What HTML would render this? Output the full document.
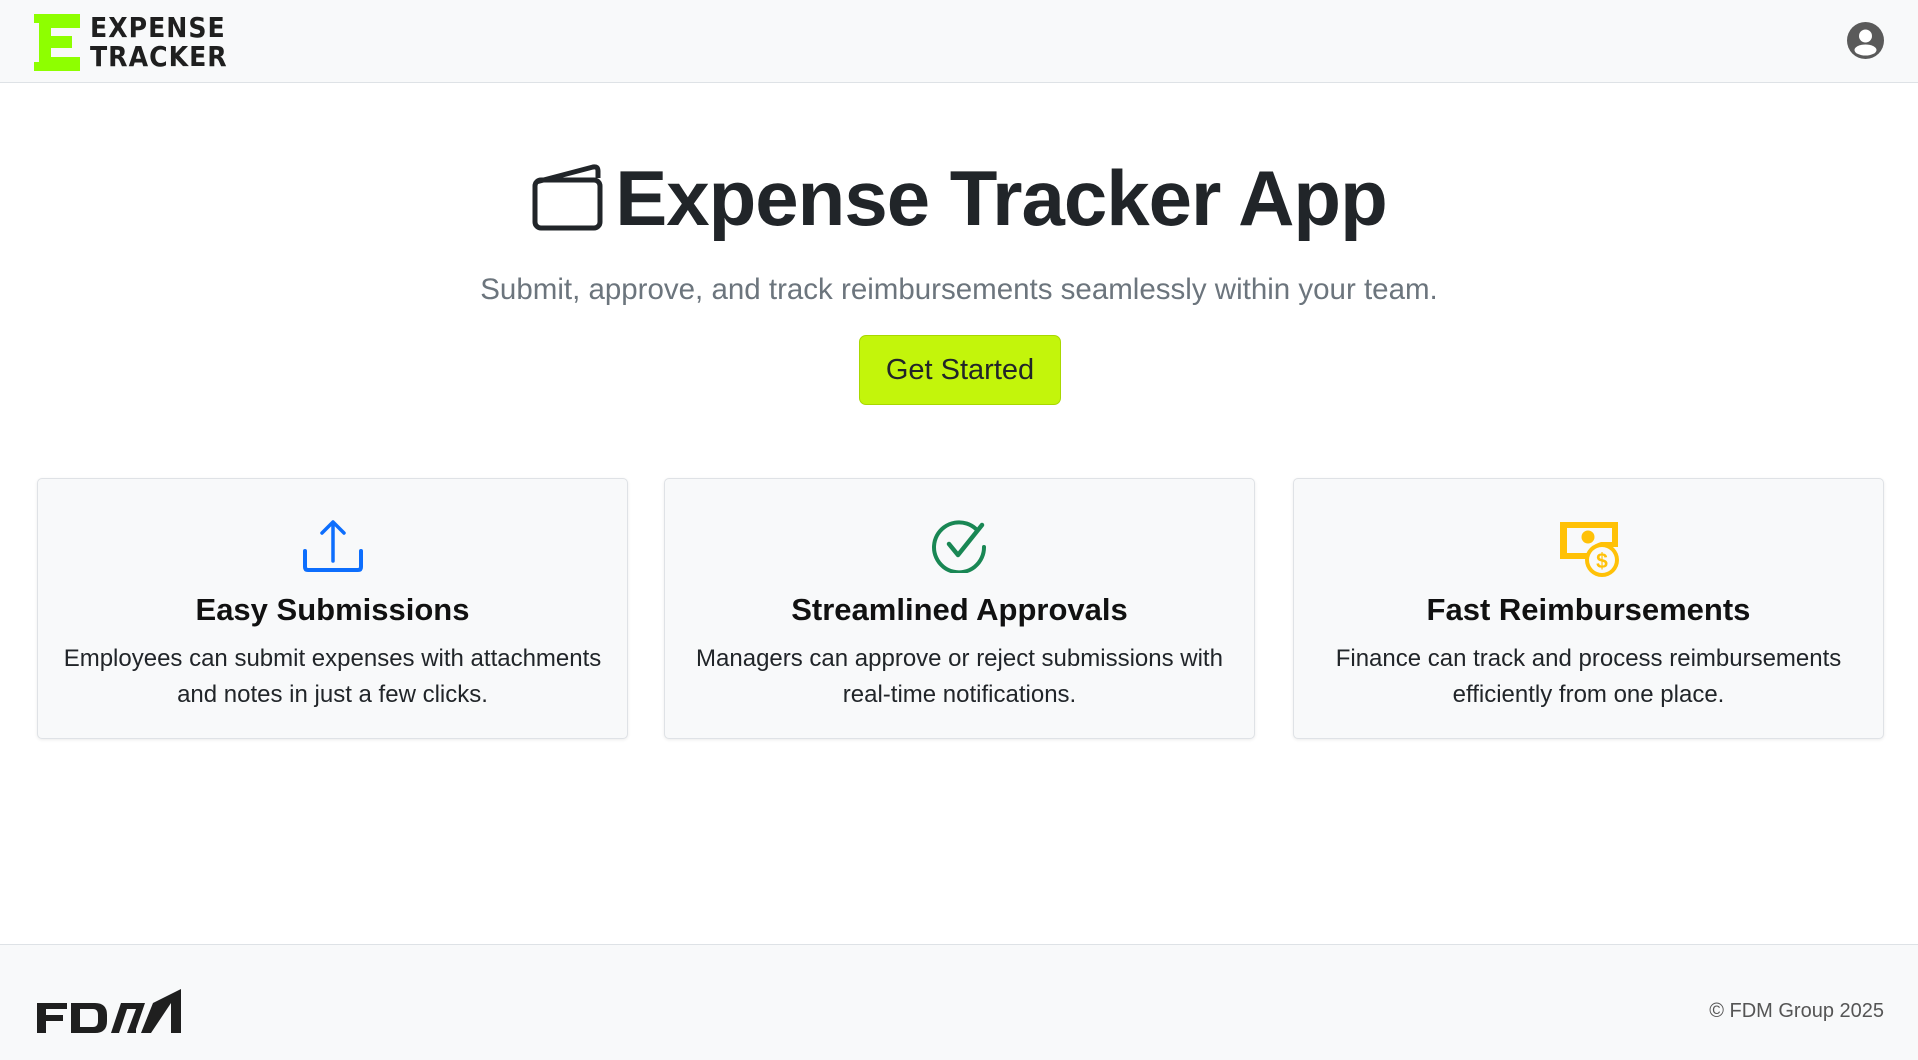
<!DOCTYPE html>
<html><head><meta charset="utf-8"><style>
*{box-sizing:border-box;margin:0;padding:0}
body{width:1918px;height:1060px;background:#fff;font-family:"Liberation Sans",sans-serif;color:#212529;position:relative;overflow:hidden}
.hdr{position:absolute;left:0;top:0;width:1918px;height:83px;background:#f8f9fa;border-bottom:1px solid #dee2e6}
.logoE{position:absolute;left:34px;top:14px}
.logoT{position:absolute;left:90px;top:13px;font-family:"DejaVu Sans Condensed","Liberation Sans Narrow",sans-serif;font-size:28px;line-height:29px;letter-spacing:1px;color:#1f1f1f;font-weight:bold}
.user{position:absolute;left:1847px;top:22px}
h1{position:absolute;top:153px;left:0;width:1918px;text-align:center;font-size:78px;font-weight:bold;color:#212529;letter-spacing:-1px}
h1 svg{vertical-align:-6px;margin-right:12px}
.sub{position:absolute;top:273px;left:0;width:1918px;text-align:center;font-size:29.5px;color:#6c757d;font-weight:300}
.btn{position:absolute;left:859px;top:335px;width:202px;height:70px;background:#c3f50b;border:1px solid #a8d800;border-radius:7px;font-size:29px;line-height:68px;text-align:center;color:#212529}
.card{position:absolute;top:478px;width:591px;height:261px;background:#f8f9fa;border:1px solid #dfe2e6;border-radius:5px;box-shadow:0 1px 3px rgba(0,0,0,.08);text-align:center}
.card svg{position:absolute;left:50%;top:40px;transform:translateX(-50%)}
.card h3{position:absolute;top:113px;width:100%;font-size:31px;font-weight:bold;color:#111}
.card p{position:absolute;top:162px;width:100%;padding:0 14px;font-size:24px;line-height:36px;color:#212529}
.ftr{position:absolute;left:0;top:944px;width:1918px;height:116px;background:#f8f9fa;border-top:1px solid #dee2e6}
.copy{position:absolute;right:34px;top:55px;font-size:20px;color:#555}
</style></head><body>
<div class="hdr">
<svg class="logoE" width="46" height="57" viewBox="0 0 46 57"><path d="M0 0H46V14H17V22H38V34H17V43H46V57H0V48H5V9H0Z" fill="#8eff00"/></svg>
<div class="logoT">EXPENSE<br>TRACKER</div>
<svg class="user" width="37" height="37" viewBox="0 0 37 37"><circle cx="18.5" cy="18.5" r="18.5" fill="#5a5a5a"/><circle cx="18.5" cy="14" r="6.5" fill="#fff"/><ellipse cx="18.5" cy="28" rx="11" ry="5.5" fill="#fff"/></svg>
</div>
<h1><svg width="72" height="67" viewBox="0 0 72 67"><path d="M5 18L62 3Q67 2 67 7V14" fill="none" stroke="#212529" stroke-width="5" stroke-linejoin="round"/><rect x="4" y="16" width="65" height="48" rx="6" fill="none" stroke="#212529" stroke-width="5"/></svg>Expense Tracker App</h1>
<div class="sub">Submit, approve, and track reimbursements seamlessly within your team.</div>
<div class="btn">Get Started</div>

<div class="card" style="left:37px">
<svg width="62" height="54" viewBox="0 0 62 54"><path d="M31 3V42M20 14L31 3L42 14" fill="none" stroke="#0d6efd" stroke-width="3.5" stroke-linecap="round" stroke-linejoin="round"/><path d="M3 32V48Q3 51 6 51H56Q59 51 59 48V32" fill="none" stroke="#0d6efd" stroke-width="4" stroke-linecap="round"/></svg>
<h3>Easy Submissions</h3>
<p>Employees can submit expenses with attachments and notes in just a few clicks.</p>
</div>
<div class="card" style="left:664px">
<svg width="56" height="56" viewBox="0 0 56 56" style="top:38px"><path d="M44 12A25 25 0 1 0 52 30" fill="none" stroke="#198754" stroke-width="4" stroke-linecap="round"/><path d="M17 27L26 38L50 8" fill="none" stroke="#198754" stroke-width="4.5" stroke-linecap="round" stroke-linejoin="round"/></svg>
<h3>Streamlined Approvals</h3>
<p>Managers can approve or reject submissions with real-time notifications.</p>
</div>
<div class="card" style="left:1293px">
<svg width="62" height="62" viewBox="0 0 62 62" style="top:38px"><path d="M2 5H60V30H45A18 18 0 0 0 34 42H2Z" fill="#ffc107"/><path d="M9 11H54V25H43A20 20 0 0 0 30 36H9Z" fill="#f8f9fa"/><circle cx="30" cy="20" r="6.5" fill="#ffc107"/><circle cx="44" cy="43" r="17" fill="#ffc107"/><circle cx="44" cy="43" r="13" fill="#f8f9fa"/><text x="44" y="51" text-anchor="middle" font-size="21" font-weight="bold" fill="#ffc107" font-family="Liberation Sans">$</text></svg>
<h3>Fast Reimbursements</h3>
<p>Finance can track and process reimbursements efficiently from one place.</p>
</div>

<div class="ftr">
<svg style="position:absolute;left:37px;top:44px" width="144" height="46" viewBox="0 0 144 46"><path d="M0 14H30V20H9V26H26V32H9V44H0Z" fill="#1f1f1f"/><path d="M34 14H58Q70 14 70 26V32Q70 44 58 44H34ZM43 20V38H56Q61 38 61 32V26Q61 20 56 20Z" fill="#1f1f1f"/><path d="M74 44L84 14H108L99 40V44H90L99 20H90L82 44Z" fill="#1f1f1f"/><path d="M104 44L116 14L144 0V44H134V14L114 44Z" fill="#1f1f1f"/></svg>
<div class="copy">© FDM Group 2025</div>
</div>
</body></html>
